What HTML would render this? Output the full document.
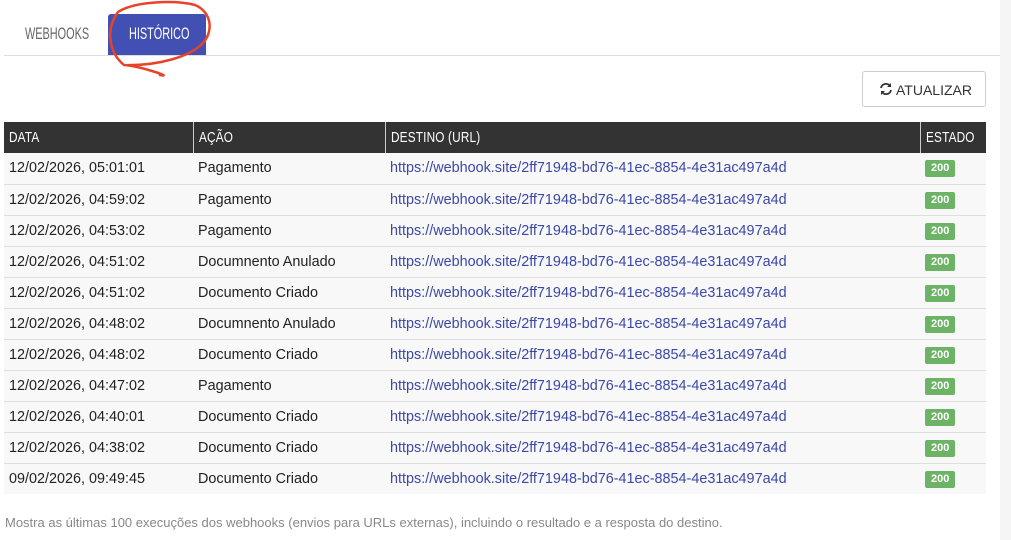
<!DOCTYPE html>
<html><head><meta charset="utf-8"><style>
*{box-sizing:border-box;margin:0;padding:0}
body{width:1011px;height:540px;background:#fff;font-family:"Liberation Sans",sans-serif;position:relative;overflow:hidden}
.strip{position:absolute;left:1000px;top:0;width:11px;height:540px;background:#f5f5f5}
.cond{display:inline-block;transform:scaleX(.82);transform-origin:left center;letter-spacing:.2px}
.tc{display:inline-block;transform:scaleX(.66);transform-origin:left center;font-size:16.5px}
.tabs{position:absolute;left:4px;top:0;width:996px;height:56px;border-bottom:1px solid #ddd}
.tab1{position:absolute;left:25px;top:25px;color:#666}
.tab2{position:absolute;left:108px;top:14px;width:98px;height:41px;background:#4150b2;border-radius:3px 3px 0 0;color:#fff}
.tab2 span{position:absolute;left:21px;top:11px}
.btn{position:absolute;left:862px;top:71px;width:124px;height:36px;border:1px solid #ccc;border-radius:3px;font-size:14px;color:#333}
.btn span{position:absolute;left:33px;top:10px}
table{position:absolute;left:4px;top:122px;width:982px;border-collapse:collapse;font-size:14.4px;table-layout:fixed}
th{background:#333;color:#fff;text-align:left;font-weight:normal;height:31px;padding:0 5px;border-left:1px solid #ccc;font-size:14.4px}
th:first-child{border-left:none}
tr:nth-child(2) td{border-top:none;height:31px}
td{background:#f8f8f8;height:31px;border-top:1px solid #ddd;padding:0 5px;color:#222;white-space:nowrap}
td.u{color:#3b48a8}
.b{display:inline-block;background:#6db366;color:#fff;font-size:11px;font-weight:bold;padding:2px 6px 3px;border-radius:2px}
.note{position:absolute;left:5px;top:515px;font-size:13px;color:#888}
</style></head><body>
<div class="strip"></div>
<div class="tabs"></div>
<div class="tab1"><span class="tc">WEBHOOKS</span></div>
<div class="tab2"><span class="tc">HISTÓRICO</span></div>
<svg style="position:absolute;left:0;top:0" width="300" height="90"><path d="M160 75 C175 78 140 66 124 65 C108 52 106 28 118 12 C135 1 175 0 195 5 C212 12 214 32 202 44 C190 56 160 66 124 65" fill="none" stroke="#e8432a" stroke-width="2.5" stroke-linecap="round"/></svg>
<div class="btn"><svg style="position:absolute;left:16px;top:10px" width="14" height="14" viewBox="0 0 14 14"><path d="M2 6 A5 5 0 0 1 11 4 M12 8 A5 5 0 0 1 3 10" fill="none" stroke="#333" stroke-width="1.8"/><path d="M12 1 V5 H8Z M2 13 V9 H6Z" fill="#333"/></svg><span>ATUALIZAR</span></div>
<table>
<colgroup><col style="width:189px"><col style="width:192px"><col style="width:535px"><col></colgroup>
<tr><th><span class="cond">DATA</span></th><th><span class="cond">AÇÃO</span></th><th><span class="cond">DESTINO (URL)</span></th><th><span class="cond">ESTADO</span></th></tr>
<tr><td>12/02/2026, 05:01:01</td><td>Pagamento</td><td class="u">https://webhook.site/2ff71948-bd76-41ec-8854-4e31ac497a4d</td><td><span class="b">200</span></td></tr>
<tr><td>12/02/2026, 04:59:02</td><td>Pagamento</td><td class="u">https://webhook.site/2ff71948-bd76-41ec-8854-4e31ac497a4d</td><td><span class="b">200</span></td></tr>
<tr><td>12/02/2026, 04:53:02</td><td>Pagamento</td><td class="u">https://webhook.site/2ff71948-bd76-41ec-8854-4e31ac497a4d</td><td><span class="b">200</span></td></tr>
<tr><td>12/02/2026, 04:51:02</td><td>Documnento Anulado</td><td class="u">https://webhook.site/2ff71948-bd76-41ec-8854-4e31ac497a4d</td><td><span class="b">200</span></td></tr>
<tr><td>12/02/2026, 04:51:02</td><td>Documento Criado</td><td class="u">https://webhook.site/2ff71948-bd76-41ec-8854-4e31ac497a4d</td><td><span class="b">200</span></td></tr>
<tr><td>12/02/2026, 04:48:02</td><td>Documnento Anulado</td><td class="u">https://webhook.site/2ff71948-bd76-41ec-8854-4e31ac497a4d</td><td><span class="b">200</span></td></tr>
<tr><td>12/02/2026, 04:48:02</td><td>Documento Criado</td><td class="u">https://webhook.site/2ff71948-bd76-41ec-8854-4e31ac497a4d</td><td><span class="b">200</span></td></tr>
<tr><td>12/02/2026, 04:47:02</td><td>Pagamento</td><td class="u">https://webhook.site/2ff71948-bd76-41ec-8854-4e31ac497a4d</td><td><span class="b">200</span></td></tr>
<tr><td>12/02/2026, 04:40:01</td><td>Documento Criado</td><td class="u">https://webhook.site/2ff71948-bd76-41ec-8854-4e31ac497a4d</td><td><span class="b">200</span></td></tr>
<tr><td>12/02/2026, 04:38:02</td><td>Documento Criado</td><td class="u">https://webhook.site/2ff71948-bd76-41ec-8854-4e31ac497a4d</td><td><span class="b">200</span></td></tr>
<tr><td>09/02/2026, 09:49:45</td><td>Documento Criado</td><td class="u">https://webhook.site/2ff71948-bd76-41ec-8854-4e31ac497a4d</td><td><span class="b">200</span></td></tr>
</table>
<div class="note">Mostra as últimas 100 execuções dos webhooks (envios para URLs externas), incluindo o resultado e a resposta do destino.</div>
</body></html>
